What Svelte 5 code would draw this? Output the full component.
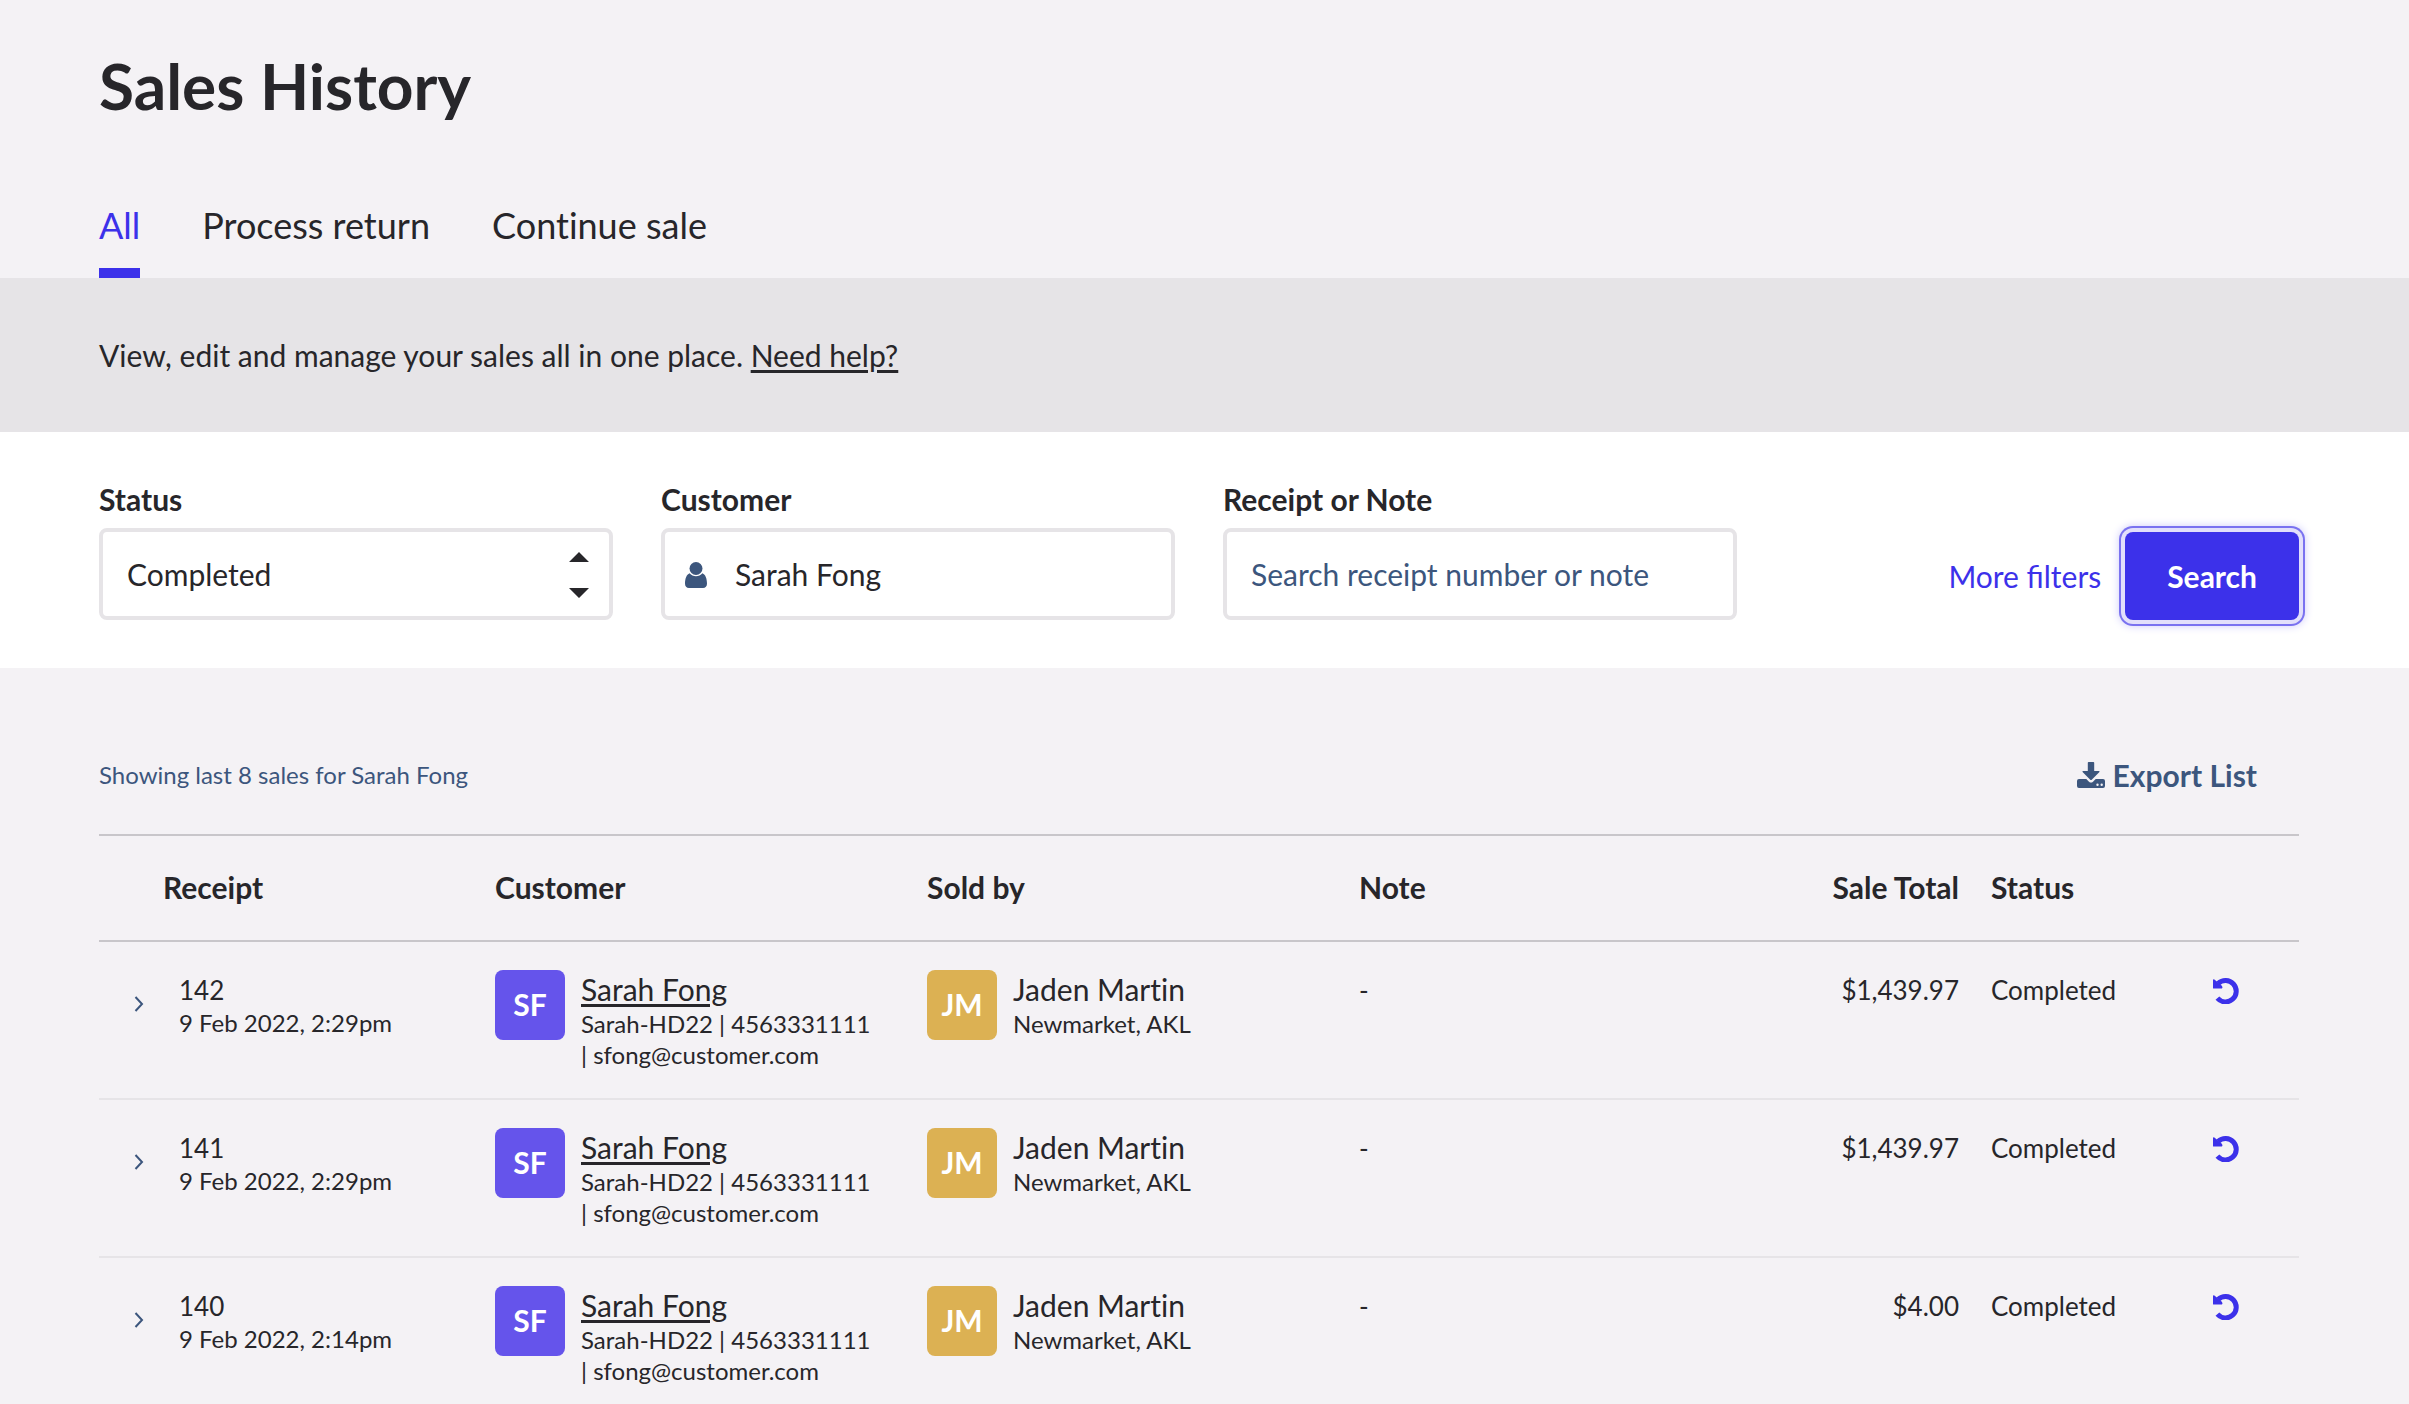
<script lang="ts">
  interface Sale {
    receipt: string
    date: string
    total: string
  }

  const tabs = ['All', 'Process return', 'Continue sale']

  const sales: Sale[] = [
    { receipt: '142', date: '9 Feb 2022, 2:29pm', total: '$1,439.97' },
    { receipt: '141', date: '9 Feb 2022, 2:29pm', total: '$1,439.97' },
    { receipt: '140', date: '9 Feb 2022, 2:14pm', total: '$4.00' },
  ]

  let activeTab = $state('All')
  let status = $state('Completed')
  let customer = $state('Sarah Fong')
  let query = $state('')
</script>

<main class="page">
  <header class="page-header">
    <h1>Sales History</h1>
    <nav class="tabs">
      {#each tabs as tab}
        <button
          type="button"
          class="tab"
          class:active={tab === activeTab}
          onclick={() => (activeTab = tab)}
        >
          {tab}
        </button>
      {/each}
    </nav>
  </header>

  <section class="intro">
    <p>View, edit and manage your sales all in one place. <a href="#help">Need help?</a></p>
  </section>

  <form class="filters" onsubmit={(e) => e.preventDefault()}>
    <div class="field">
      <label for="status">Status</label>
      <div class="control">
        <select id="status" bind:value={status}>
          <option>Completed</option>
          <option>Parked</option>
          <option>Voided</option>
        </select>
        <svg class="arrows" viewBox="0 0 20 46" aria-hidden="true">
          <path d="M0 10 10 0l10 10zM0 36h20L10 46z" />
        </svg>
      </div>
    </div>
    <div class="field">
      <label for="customer">Customer</label>
      <div class="control">
        <input id="customer" class="with-icon" type="text" bind:value={customer} />
        <svg class="user" viewBox="0 0 22 26" aria-hidden="true">
          <ellipse cx="11" cy="6.5" rx="6.5" ry="6.5" />
          <path d="M4.6 11.3C1.4 12.6 0 17 0 21.5C0 24.3 1.5 26 4 26H18C20.5 26 22 24.3 22 21.5C22 17 20.6 12.6 17.4 11.3C15.8 13.2 13.5 14.2 11 14.2S6.2 13.2 4.6 11.3Z" />
        </svg>
      </div>
    </div>
    <div class="field">
      <label for="query">Receipt or Note</label>
      <div class="control">
        <input
          id="query"
          type="text"
          placeholder="Search receipt number or note"
          bind:value={query}
        />
      </div>
    </div>
    <div class="filter-actions">
      <button type="button" class="more-btn">More filters</button>
      <button type="submit" class="search-btn">Search</button>
    </div>
  </form>

  <section class="results">
    <div class="results-bar">
      <span class="summary">Showing last 8 sales for Sarah Fong</span>
      <button type="button" class="export-btn">
        <svg class="download" viewBox="0 0 28 26" aria-hidden="true">
          <path d="M10.8 0.8Q10.8 0 11.6 0H16.4Q17.2 0 17.2 0.8V9H21.8Q23.3 9 22.2 10.2L15 17.5Q14 18.5 13 17.5L5.8 10.2Q4.7 9 6.2 9H10.8Z" />
          <path fill-rule="evenodd" d="M2 17H9.3L12 19.7Q14 21.5 16 19.7L18.7 17H26Q28 17 28 19V24Q28 26 26 26H2Q0 26 0 24V19Q0 17 2 17ZM20.5 21.5a1.2 1.2 0 1 0 0 2.4a1.2 1.2 0 1 0 0-2.4ZM24.7 21.5a1.2 1.2 0 1 0 0 2.4a1.2 1.2 0 1 0 0-2.4Z" />
        </svg>
        Export List
      </button>
    </div>

    <table>
      <colgroup>
        <col class="col-expand" />
        <col class="col-receipt" />
        <col />
        <col />
        <col />
        <col class="col-total" />
        <col class="col-status" />
        <col class="col-action" />
      </colgroup>
      <thead>
        <tr>
          <th></th>
          <th>Receipt</th>
          <th>Customer</th>
          <th>Sold by</th>
          <th>Note</th>
          <th class="total">Sale Total</th>
          <th>Status</th>
          <th></th>
        </tr>
      </thead>
      <tbody>
        {#each sales as sale (sale.receipt)}
          <tr>
            <td class="expand">
              <button type="button" class="icon-btn" aria-label="Expand sale {sale.receipt}">
                <svg class="chevron" viewBox="0 0 10 18" aria-hidden="true">
                  <path d="M1.5 2 8 9l-6.5 7" />
                </svg>
              </button>
            </td>
            <td class="receipt">
              <div class="text">{sale.receipt}</div>
              <div class="date">{sale.date}</div>
            </td>
            <td>
              <div class="person">
                <span class="avatar customer">SF</span>
                <div class="details">
                  <a class="name" href="#customer">Sarah Fong</a>
                  <div class="meta">
                    Sarah-HD22 | 4563331111 <span class="email">| sfong@customer.com</span>
                  </div>
                </div>
              </div>
            </td>
            <td>
              <div class="person">
                <span class="avatar seller">JM</span>
                <div class="details">
                  <span class="name">Jaden Martin</span>
                  <div class="meta">Newmarket, AKL</div>
                </div>
              </div>
            </td>
            <td><div class="text">-</div></td>
            <td class="total"><div class="text">{sale.total}</div></td>
            <td><div class="text">Completed</div></td>
            <td class="action">
              <button type="button" class="icon-btn" aria-label="Return sale {sale.receipt}">
                <svg class="undo" viewBox="0 0 26 26" aria-hidden="true">
                  <path class="arc" d="M5.2 5.4A10.7 10.7 0 1 1 4.4 20.2" />
                  <path class="head" d="M0 1.8Q0.4 0.6 1.4 1.6L8.6 7.6Q10.2 10 8.8 10.5H0.6Q0 10.5 0 9.9Z" />
                </svg>
              </button>
            </td>
          </tr>
        {/each}
      </tbody>
    </table>
  </section>
</main>

<style>
  :global(body) {
    margin: 0;
    background: #f4f2f5;
    overflow: hidden;
  }

  .page {
    color: #27262a;
    font-family: Lato, 'Liberation Sans', sans-serif;
    font-size: 30px;
    line-height: 40px;
    font-variant-ligatures: no-common-ligatures;
  }

  .page *,
  .page {
    box-sizing: border-box;
  }

  button,
  input,
  select {
    font: inherit;
    color: inherit;
  }

  button {
    padding: 0;
    border: 0;
    background: none;
    cursor: pointer;
  }

  a {
    color: inherit;
    text-underline-offset: 3px;
  }

  svg {
    fill: currentColor;
  }

  .page-header {
    padding: 46px 110px 0 99px;
  }

  h1 {
    margin: 0;
    font-size: 64px;
    line-height: 80px;
    font-weight: 700;
  }

  .tabs {
    display: flex;
    gap: 62px;
    margin-top: 70px;
  }

  .tab {
    height: 82px;
    padding-bottom: 14px;
    border-bottom: 10px solid transparent;
    font-size: 36px;
  }

  .tab.active {
    border-bottom-color: #3c31ea;
    color: #3c31ea;
  }

  .intro {
    padding: 57px 110px 57px 99px;
    background: #e6e4e7;
  }

  .intro p {
    margin: 0;
  }

  .filters {
    display: grid;
    grid-template-columns: repeat(4, 1fr);
    gap: 48px;
    padding: 48px 110px 48px 99px;
    background: #fff;
  }

  .field label {
    display: block;
    margin-bottom: 10px;
    line-height: 38px;
    font-weight: 700;
  }

  .control {
    position: relative;
  }

  input,
  select {
    display: block;
    width: 100%;
    height: 92px;
    padding: 0 24px;
    border: 4px solid #e6e4e7;
    border-radius: 8px;
    background: #fff;
    outline: none;
    appearance: none;
  }

  input::placeholder {
    color: #3c567d;
    opacity: 1;
  }

  .with-icon {
    padding-left: 70px;
  }

  .arrows {
    position: absolute;
    top: 24px;
    right: 24px;
    width: 20px;
    height: 46px;
    pointer-events: none;
  }

  .user {
    position: absolute;
    top: 34px;
    left: 24px;
    width: 22px;
    height: 26px;
    color: #3c567d;
  }

  .filter-actions {
    display: flex;
    align-items: flex-end;
    justify-content: flex-end;
    gap: 24px;
  }

  .more-btn {
    height: 88px;
    color: #3c31ea;
    font-variant-ligatures: common-ligatures;
  }

  .search-btn {
    height: 88px;
    padding: 0 42px;
    border-radius: 8px;
    background: #3c31ea;
    color: #fff;
    font-weight: 700;
    box-shadow:
      0 0 0 4px #e2dffb,
      0 0 0 6px #7a72f0,
      0 0 8px 6px #cfccfa;
  }

  .results {
    padding: 86px 110px 0 99px;
  }

  .results-bar {
    display: flex;
    align-items: center;
    justify-content: space-between;
    height: 80px;
    padding: 0 42px 38px 0;
  }

  .summary,
  .export-btn {
    color: #3c567d;
  }

  .summary {
    font-size: 24px;
  }

  .export-btn {
    display: flex;
    align-items: center;
    gap: 8px;
    font-weight: 700;
  }

  .download {
    width: 28px;
    height: 26px;
  }

  table {
    width: 100%;
    border-collapse: separate;
    border-spacing: 0;
    table-layout: fixed;
  }

  .col-expand {
    width: 48px;
  }

  .col-receipt {
    width: 332px;
  }

  .col-total {
    width: 200px;
  }

  .col-status {
    width: 190px;
  }

  .col-action {
    width: 134px;
  }

  th {
    height: 108px;
    padding: 0 16px 2px;
    border-top: 2px solid #c8c6ca;
    border-bottom: 2px solid #c8c6ca;
    text-align: left;
    font-weight: 700;
  }

  td {
    height: 158px;
    padding: 28px 16px;
    border-bottom: 2px solid #e6e4e7;
    vertical-align: top;
  }

  .total {
    text-align: right;
  }

  .expand {
    padding-right: 0;
    padding-left: 35px;
  }

  .receipt {
    padding-left: 32px;
  }

  .action {
    padding-left: 48px;
  }

  .icon-btn {
    display: flex;
    align-items: center;
    height: 42px;
  }

  .expand .icon-btn {
    height: 68px;
  }

  .chevron {
    width: 10px;
    height: 18px;
    fill: none;
    stroke: #3c567d;
    stroke-width: 2;
  }

  .text {
    font-size: 26px;
  }

  .date {
    font-size: 24px;
    line-height: 26px;
  }

  .person {
    display: flex;
    gap: 16px;
  }

  .avatar {
    display: flex;
    flex: none;
    align-items: center;
    justify-content: center;
    width: 70px;
    height: 70px;
    padding-bottom: 2px;
    border-radius: 8px;
    color: #fff;
    font-weight: 700;
  }

  .customer {
    background: #6554eb;
  }

  .seller {
    background: #dcb153;
  }

  .name {
    display: block;
    line-height: 38px;
  }

  .meta {
    font-size: 24px;
    line-height: 31px;
  }

  .email {
    white-space: nowrap;
  }

  .undo {
    width: 26px;
    height: 26px;
    color: #3c31ea;
  }

  .arc {
    fill: none;
    stroke: currentColor;
    stroke-width: 5;
  }
</style>
